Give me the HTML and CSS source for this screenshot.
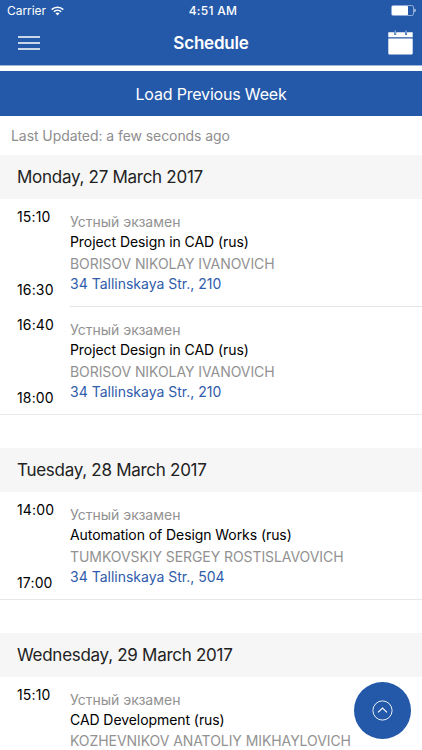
FILE: index.html
```html
<!DOCTYPE html>
<html lang="en">
<head>
    <meta charset="UTF-8">
    <meta name="viewport" content="width=device-width, initial-scale=1.0">
    <title>Schedule</title>
    <link rel="stylesheet" href="styles.css">
</head>
<body>
    <header class="header">
        <div class="status-bar">
            <div class="carrier">
                <span>Carrier</span>
                <svg class="wifi" width="13" height="10" viewBox="0 0 13 10" fill="none" stroke="#fff" stroke-width="1.5">
                    <path d="M0.7 3.6C3.9 0.4 9.1 0.4 12.3 3.6"/>
                    <path d="M2.8 5.7C4.9 3.7 8.1 3.7 10.2 5.7"/>
                    <path d="M6.5 9.4L4.5 7.3C5.6 6.3 7.4 6.3 8.5 7.3Z" fill="#fff" stroke="none"/>
                </svg>
            </div>
            <span class="clock">4:51 AM</span>
            <svg class="battery" width="25" height="11" viewBox="0 0 25 11">
                <rect x="0.5" y="0.5" width="22" height="10" rx="1.6" fill="none" stroke="#a9c0e4" stroke-width="0.8"/>
                <rect x="1" y="1" width="16" height="9" rx="0.8" fill="#fff"/>
                <path d="M23.5 3.6C25 4.2 25 6.8 23.5 7.4Z" fill="#fff"/>
            </svg>
        </div>
        <div class="nav-bar">
            <button class="icon-button" aria-label="Menu">
                <svg width="22" height="14" viewBox="0 0 22 14" stroke="#fff" stroke-width="1.5">
                    <path d="M0 1H22M0 7H22M0 13H22"/>
                </svg>
            </button>
            <h1 class="title">Schedule</h1>
            <button class="icon-button" aria-label="Calendar">
                <svg width="25" height="25" viewBox="0 0 25 25">
                    <path d="M0.3 2.2H24.7V7.2H0.3ZM0.3 8.4H24.7V23.3Q24.7 24.5 23.5 24.5H1.5Q0.3 24.5 0.3 23.3Z" fill="#fff"/>
                    <path d="M7.2 0.8V5M18 0.8V5" stroke="#2459a9" stroke-width="2"/>
                    <path d="M7.2 0.5V4.6M18 0.5V4.6" stroke="#c5d4ec" stroke-width="0.9"/>
                </svg>
            </button>
        </div>
    </header>

    <button class="load-button">Load Previous Week</button>
    <p class="updated">Last Updated: a few seconds ago</p>

    <main class="days">
        <section class="day">
            <h2 class="day-title">Monday, 27 March 2017</h2>
            <div class="lesson">
                <div class="times"><span>15:10</span><span>16:30</span></div>
                <div class="info">
                    <span class="type">Устный экзамен</span>
                    <span class="subject">Project Design in CAD (rus)</span>
                    <span class="teacher">BORISOV NIKOLAY IVANOVICH</span>
                    <span class="place">34 Tallinskaya Str., 210</span>
                </div>
            </div>
            <div class="lesson">
                <div class="times"><span>16:40</span><span>18:00</span></div>
                <div class="info">
                    <span class="type">Устный экзамен</span>
                    <span class="subject">Project Design in CAD (rus)</span>
                    <span class="teacher">BORISOV NIKOLAY IVANOVICH</span>
                    <span class="place">34 Tallinskaya Str., 210</span>
                </div>
            </div>
        </section>

        <section class="day">
            <h2 class="day-title">Tuesday, 28 March 2017</h2>
            <div class="lesson">
                <div class="times"><span>14:00</span><span>17:00</span></div>
                <div class="info">
                    <span class="type">Устный экзамен</span>
                    <span class="subject">Automation of Design Works (rus)</span>
                    <span class="teacher">TUMKOVSKIY SERGEY ROSTISLAVOVICH</span>
                    <span class="place">34 Tallinskaya Str., 504</span>
                </div>
            </div>
        </section>

        <section class="day">
            <h2 class="day-title">Wednesday, 29 March 2017</h2>
            <div class="lesson lesson-cut">
                <div class="times"><span>15:10</span></div>
                <div class="info">
                    <span class="type">Устный экзамен</span>
                    <span class="subject">CAD Development (rus)</span>
                    <span class="teacher">KOZHEVNIKOV ANATOLIY MIKHAYLOVICH</span>
                </div>
            </div>
        </section>
    </main>

    <button class="up-button" aria-label="Scroll to top">
        <svg width="21" height="21" viewBox="0 0 21 21" fill="none" stroke="#fff">
            <circle cx="10.5" cy="10.5" r="9.6" stroke-width="0.9"/>
            <path d="M6 12.4L10.5 8L15 12.4" stroke-width="1.1"/>
        </svg>
    </button>
</body>
</html>
```

FILE: styles.css
```css
* {
    box-sizing: border-box;
}

body {
    font-family: Inter, "Liberation Sans", sans-serif;
    background-color: #fff;
    color: #000;
    margin: 0;
}

button {
    border: none;
    padding: 0;
    font-family: inherit;
    color: #fff;
    background-color: #2459a9;
    cursor: pointer;
}

svg {
    display: block;
}

.header {
    height: 66px;
    background-color: #2459a9;
    color: #fff;
    border-bottom: 1px solid #9db5da;
}

.status-bar {
    display: grid;
    grid-template-columns: 1fr auto 1fr;
    align-items: center;
    height: 21px;
    padding: 0 6px 0 7px;
    font-size: 12px;
}

.carrier {
    display: flex;
    align-items: center;
    gap: 5px;
    letter-spacing: -0.05px;
}

.clock {
    padding-left: 3px;
    font-weight: 500;
    letter-spacing: 0.3px;
}

.battery {
    justify-self: end;
}

.nav-bar {
    display: flex;
    align-items: center;
    height: 43px;
    padding: 0 9px 0 18px;
}

.title {
    flex: 1;
    margin: 0;
    padding-right: 6px;
    font-size: 17px;
    font-weight: 600;
    letter-spacing: -0.2px;
    text-align: center;
}

.load-button {
    display: block;
    width: 100%;
    height: 45px;
    margin-top: 5px;
    font-size: 16px;
    letter-spacing: -0.18px;
}

.updated {
    margin: 0;
    padding-left: 11px;
    height: 39px;
    line-height: 39px;
    font-size: 14px;
    letter-spacing: -0.07px;
    color: #8e8e8e;
}

.days {
    display: flex;
    flex-direction: column;
    gap: 33px;
}

.day-title {
    margin: 0;
    padding-left: 17px;
    height: 44px;
    line-height: 45px;
    font-size: 17px;
    font-weight: 400;
    letter-spacing: -0.28px;
    color: #222;
    background-color: #f6f6f6;
}

.lesson {
    display: flex;
    height: 108px;
    padding-left: 17px;
}

.lesson:last-child {
    border-bottom: 1px solid #e8e8e8;
}

.times {
    display: flex;
    flex-direction: column;
    justify-content: space-between;
    width: 53px;
    padding: 8px 0 7px;
    font-size: 14px;
    line-height: 20px;
    letter-spacing: 0.15px;
}

.lesson:last-child .times {
    padding-bottom: 6px;
}

.info {
    display: flex;
    flex-direction: column;
    flex: 1;
    padding-top: 13px;
    font-size: 14px;
    line-height: 20px;
    letter-spacing: -0.07px;
    white-space: nowrap;
}

.lesson:not(:last-child) .info {
    border-bottom: 1px solid #e4e4e4;
}

.lesson.lesson-cut {
    height: 73px;
    border-bottom: none;
    overflow: hidden;
}

.type,
.teacher {
    color: #929292;
}

.type {
    line-height: 19px;
    letter-spacing: 0;
}

.subject {
    line-height: 21px;
}

.teacher {
    line-height: 24px;
}

.lesson-cut .teacher {
    line-height: 22px;
}

.place {
    line-height: 16px;
    letter-spacing: 0;
    color: #2f5cab;
}

.up-button {
    display: flex;
    align-items: center;
    justify-content: center;
    position: fixed;
    right: 11px;
    bottom: 11px;
    width: 57px;
    height: 57px;
    border-radius: 50%;
}
```
